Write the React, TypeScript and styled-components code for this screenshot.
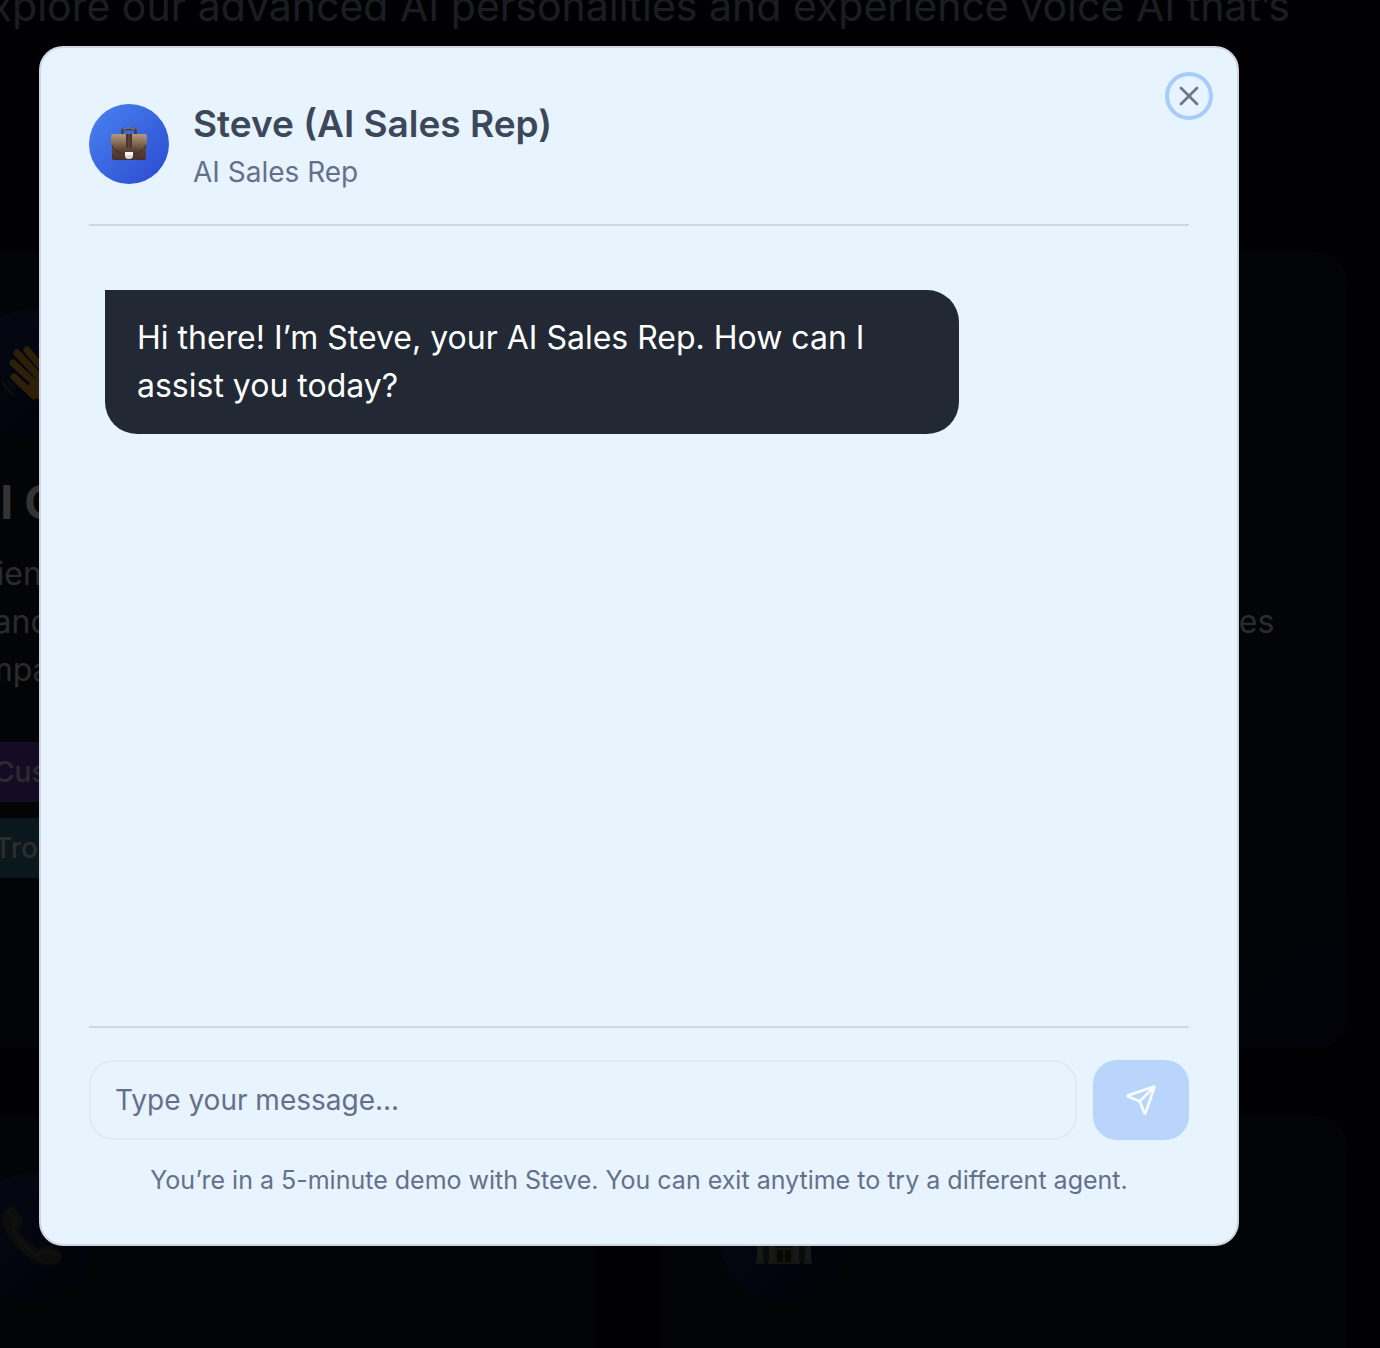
import React, { useState } from "react";
import styled, { createGlobalStyle } from "styled-components";
import { Send, X } from "lucide-react";

const GlobalStyle = createGlobalStyle`
  *, *::before, *::after { box-sizing: border-box; }
  body {
    margin: 0;
    background: #080814;
    font-family: Inter, "Liberation Sans", sans-serif;
    -webkit-font-smoothing: antialiased;
  }
  h2, h3, p, ul { margin: 0; padding: 0; }
  button, input { font-family: inherit; }
`;

const Page = styled.div`
  height: 100vh;
  overflow: hidden;
`;

const Showcase = styled.main`
  margin: -22px 33px 0 -92px;
`;

const Intro = styled.p`
  height: 274px;
  color: #8496ac;
  font-size: 41px;
  line-height: 56px;
  text-align: center;
  white-space: nowrap;
`;

const AgentGrid = styled.div`
  display: grid;
  grid-template-columns: 1fr 1fr;
  grid-auto-rows: 796px;
  gap: 68px;
`;

const AgentCard = styled.article`
  padding: 56px;
  overflow: hidden;
  border: 2px solid #12141f;
  border-radius: 32px;
  background: radial-gradient(circle at 100% 100%, #0b1238 0, #10141f 160px);
`;

const AgentIcon = styled.div`
  display: flex;
  align-items: center;
  justify-content: center;
  width: 128px;
  height: 128px;
  border-radius: 50%;
  background: linear-gradient(135deg, #1a2868, #080d2b);
`;

const AgentName = styled.h3`
  margin: 32px 0 16px;
  color: #fff;
  font-size: 46px;
  font-weight: 700;
  line-height: 64px;
  white-space: nowrap;
`;

const AgentText = styled.p`
  color: #d1d5db;
  font-size: 32px;
  line-height: 48px;
  white-space: pre;
`;

const Tags = styled.ul`
  display: flex;
  flex-direction: column;
  align-items: flex-start;
  gap: 16px;
  margin-top: 48px;
  list-style: none;
`;

const Tag = styled.li<{ $color: string }>`
  padding: 0 28px;
  background: ${(p) => p.$color};
  color: #d9d9d9;
  font-size: 28px;
  font-weight: 500;
  line-height: 60px;
`;

const Overlay = styled.div`
  position: fixed;
  inset: 0;
  display: flex;
  justify-content: center;
  padding: 46px 141px 102px 39px;
  background: rgba(0, 0, 0, 0.8);
`;

const Dialog = styled.section`
  position: relative;
  display: flex;
  flex-direction: column;
  width: 100%;
  max-width: 1200px;
  padding: 48px;
  border: 2px solid #d1d5e2;
  border-radius: 24px;
  background: #e7f4fe;
`;

const CloseButton = styled.button`
  position: absolute;
  top: 32px;
  right: 32px;
  display: flex;
  align-items: center;
  justify-content: center;
  width: 32px;
  height: 32px;
  padding: 0;
  border: 0;
  border-radius: 50%;
  background: #e7f4fe;
  box-shadow: 0 0 0 4px #e7f4fe, 0 0 0 8px #a9cbfb;
  color: #6b7688;
  cursor: pointer;
`;

const Header = styled.header`
  display: flex;
  align-items: center;
  gap: 24px;
  padding-bottom: 32px;
  border-bottom: 2px solid #d0d8e4;
`;

const Avatar = styled.div`
  display: flex;
  align-items: center;
  justify-content: center;
  width: 80px;
  height: 80px;
  border-radius: 50%;
  background: linear-gradient(135deg, #4b83f0, #2949cf);
`;

const Title = styled.h2`
  color: #3c475a;
  font-size: 37px;
  font-weight: 600;
  line-height: 56px;
`;

const Role = styled.p`
  color: #64708b;
  font-size: 28px;
  line-height: 40px;
`;

const Messages = styled.div`
  flex: 1;
  padding: 64px 16px;
`;

const Bubble = styled.p`
  width: 80%;
  padding: 24px 32px;
  border-radius: 0 32px 32px 32px;
  background: #222935;
  color: #fff;
  font-size: 32px;
  line-height: 48px;
`;

const Composer = styled.form`
  display: flex;
  gap: 16px;
  padding-top: 32px;
  border-top: 2px solid #d0d8e4;
`;

const MessageInput = styled.input`
  flex: 1;
  min-width: 0;
  height: 80px;
  padding: 0 24px;
  border: 2px solid #e2e9f1;
  border-radius: 24px;
  outline: none;
  background: transparent;
  color: #3c475a;
  font-size: 28px;
  &::placeholder { color: #64708b; opacity: 1; }
`;

const SendButton = styled.button`
  display: flex;
  align-items: center;
  justify-content: center;
  width: 96px;
  height: 80px;
  border: 0;
  border-radius: 24px;
  background: #bad5fb;
  color: #f8fbff;
`;

const Hint = styled.p`
  margin-top: 24px;
  color: #64708b;
  font-size: 25px;
  line-height: 32px;
  text-align: center;
`;

const Briefcase = () => (
  <svg width="40" height="40" viewBox="0 0 40 40" aria-hidden="true">
    <defs>
      <linearGradient id="leather" x1="0" y1="0" x2="0" y2="1">
        <stop offset="0" stopColor="#b39a84" />
        <stop offset="0.35" stopColor="#866a57" />
        <stop offset="0.6" stopColor="#5f4436" />
        <stop offset="1" stopColor="#46302a" />
      </linearGradient>
    </defs>
    <path d="M13.500 10V7Q13.500 5 16 5H24Q26.500 5 26.500 7V10" fill="none" stroke="#4c3a32" strokeWidth="2.500" />
    <path d="M14 5.500Q16 4 20 4T26 5.500" fill="none" stroke="#9d8878" strokeWidth="1.200" />
    <path d="M4 10H36Q38 10 38 12V19Q38 21 37 22V34Q37 36 35 36H5Q3 36 3 34V22Q2 21 2 19V12Q2 10 4 10z" fill="url(#leather)" />
    <path d="M3 21Q5 28 15 30H25Q35 28 37 21" fill="none" stroke="#432d25" />
    <path d="M17 10h6v14h-6z" fill="#4b3529" />
    <path d="M19 10h2v14h-2z" fill="#5b4232" />
    <path d="M16 28h8v4q0 3-4 3t-4-3z" fill="#d9dadb" />
    <path d="M16 28h8v3h-8z" fill="#f7f7f7" />
  </svg>
);

const Wave = () => (
  <svg width="72" height="72" viewBox="0 0 72 72" aria-hidden="true">
    <g stroke="#d99e32" strokeWidth="7" strokeLinecap="round" fill="none">
      <path d="M20 39L40 58M19 25L46 50M23 15L52 46M33 12L60 44" />
    </g>
    <path d="M31 50L50 34 54 36 52 24Q52 16 58 20 67 30 66 46 64 60 52 63 40 62 31 50z" fill="#d99e32" />
    <path d="M9 44Q13 53 20 57M14 43Q17 48 21 51M44 7Q51 11 53 19" fill="none" stroke="#57503c" strokeWidth="2" />
  </svg>
);

const Phone = () => (
  <svg width="72" height="72" viewBox="0 0 72 72" aria-hidden="true">
    <path d="M10 8Q17 2 21 5L29 16Q31 21 24 27 30 38 44 47 52 43 56 44L66 50Q70 56 64 61 54 66 42 60 14 44 9 22 7 12 10 8z" fill="#42423f" stroke="#2b2b2b" strokeWidth="2" />
    <path d="M14 9L22 20 18 27Q26 43 42 53L52 48 64 53" fill="none" stroke="#575755" strokeWidth="2" />
  </svg>
);

const Bank = () => (
  <svg width="64" height="64" viewBox="0 0 64 64" aria-hidden="true">
    <path d="M32 4L60 20v6H4v-6z" fill="#606466" />
    <path d="M6 26h52v30H6z" fill="#343a40" />
    <path d="M5 26h6v30H5zM17 26h6v30h-6zM41 26h6v30h-6zM53 26h6v30h-6z" fill="#737779" />
    <path d="M4 54h8v4H4zM16 54h8v4h-8zM40 54h8v4h-8zM52 54h8v4h-8z" fill="#686b6d" />
    <path d="M24 43h16v14H24zM32 43v14" fill="#182c38" stroke="#756022" strokeWidth="2" />
  </svg>
);

type Agent = { name: string; text: string; icon: React.ReactNode; tags: string[] };

const agents: Agent[] = [
  { name: "AI Chatbot", text: "Friendly agent who can\nstand in for real human\nempathy.", icon: <Wave />, tags: ["Customer Care", "Troubleshooting"] },
  { name: "AI Sales Rep", text: "Knows your product well\nthen guides visitors through features\nand pricing.", icon: <Briefcase />, tags: ["Sales", "Outreach"] },
  { name: "AI Receptionist", text: "Answers every call.", icon: <Phone />, tags: [] },
  { name: "AI Banker", text: "Supports account holders.", icon: <Bank />, tags: [] },
];

const tagColors = ["#6937b4", "#32738f"];

export default function App() {
  const [message, setMessage] = useState("");
  return (
    <>
      <GlobalStyle />
      <Page>
        <Showcase>
          <Intro>Explore our advanced AI personalities and experience voice AI that’s</Intro>
          <AgentGrid>
            {agents.map((agent) => (
              <AgentCard key={agent.name}>
                <AgentIcon>{agent.icon}</AgentIcon>
                <AgentName>{agent.name}</AgentName>
                <AgentText>{agent.text}</AgentText>
                <Tags>
                  {agent.tags.map((tag, i) => (
                    <Tag key={tag} $color={tagColors[i]}>{tag}</Tag>
                  ))}
                </Tags>
              </AgentCard>
            ))}
          </AgentGrid>
        </Showcase>
      </Page>
      <Overlay>
        <Dialog role="dialog" aria-modal="true" aria-labelledby="agent-title">
          <CloseButton type="button" aria-label="Close">
            <X size={32} strokeWidth={2} />
          </CloseButton>
          <Header>
            <Avatar><Briefcase /></Avatar>
            <div>
              <Title id="agent-title">Steve (AI Sales Rep)</Title>
              <Role>AI Sales Rep</Role>
            </div>
          </Header>
          <Messages>
            <Bubble>Hi there! I’m Steve, your AI Sales Rep. How can I assist you today?</Bubble>
          </Messages>
          <Composer onSubmit={(e) => e.preventDefault()}>
            <MessageInput
              aria-label="Message"
              placeholder="Type your message..."
              value={message}
              onChange={(e) => setMessage(e.target.value)}
            />
            <SendButton type="submit" aria-label="Send message">
              <Send size={32} strokeWidth={2} />
            </SendButton>
          </Composer>
          <Hint>You’re in a 5-minute demo with Steve. You can exit anytime to try a different agent.</Hint>
        </Dialog>
      </Overlay>
    </>
  );
}
